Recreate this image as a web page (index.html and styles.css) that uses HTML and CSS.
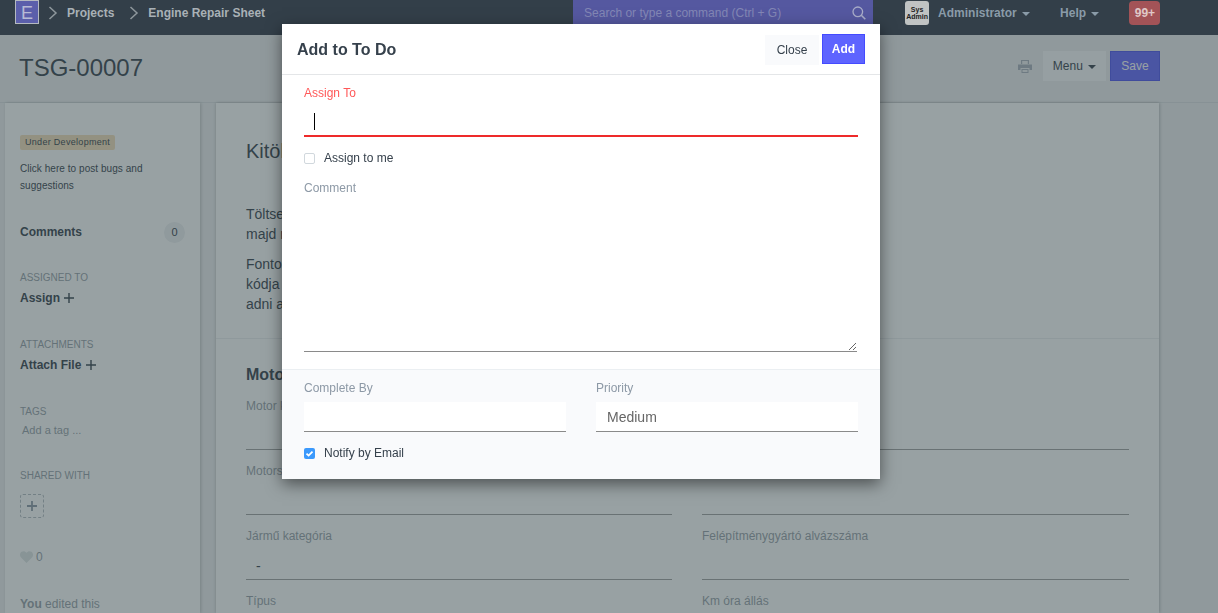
FILE: index.html
```html
<!DOCTYPE html>
<html lang="en">

<head>
    <meta charset="UTF-8">
    <meta name="viewport" content="width=device-width, initial-scale=1.0">
    <title>TSG-00007</title>
    <link rel="stylesheet" href="styles.css">
</head>

<body>
    <nav class="navbar">
        <div class="logo">E</div>
        <svg class="crumb-arrow" width="10" height="14" viewBox="0 0 10 14"><path d="M1.500 1l6.500 6-6.500 6" fill="none" stroke="#8e979c" stroke-width="1.500"/></svg>
        <a class="crumb">Projects</a>
        <svg class="crumb-arrow crumb-arrow-next" width="10" height="14" viewBox="0 0 10 14"><path d="M1.500 1l6.500 6-6.500 6" fill="none" stroke="#8e979c" stroke-width="1.500"/></svg>
        <a class="crumb">Engine Repair Sheet</a>
        <div class="search">
            <span>Search or type a command (Ctrl + G)</span>
            <svg width="14" height="14" viewBox="0 0 14 14"><circle cx="5.800" cy="5.800" r="4.800" fill="none" stroke="#a9adc9" stroke-width="1.300"/><path d="M9.300 9.300l4 4" stroke="#a9adc9" stroke-width="1.600"/></svg>
        </div>
        <div class="avatar"><span>Sys<br>Admin</span></div>
        <a class="nav-link nav-admin">Administrator <i class="caret"></i></a>
        <a class="nav-link nav-help">Help <i class="caret"></i></a>
        <div class="notify">99+</div>
    </nav>

    <header class="page-head">
        <h1>TSG-00007</h1>
        <svg class="print" width="14" height="13" viewBox="0 0 14 13"><path d="M3 0h8v4H3zM0 4.500h14V10h-2.500V8h-9v2H0zM3.500 9h7v4h-7z" fill="#abb1bd"/><path d="M4.200 1h5.600v3H4.200zM4.500 10h5v2h-5z" fill="#eeeff1"/></svg>
        <button class="btn-menu">Menu <i class="caret"></i></button>
        <button class="btn-save">Save</button>
    </header>

    <div class="page-body">
        <aside class="sidebar">
            <span class="dev-badge">Under Development</span>
            <p class="bugs">Click here to post bugs and suggestions</p>
            <div class="comments"><b>Comments</b><span class="count">0</span></div>
            <h6 class="side-title side-assigned">ASSIGNED TO</h6>
            <div class="side-action">Assign <svg class="plus" width="10" height="10" viewBox="0 0 10 10"><path d="M0 5h10M5 0v10" stroke="#36414c" stroke-width="1.400"/></svg></div>
            <h6 class="side-title side-attach">ATTACHMENTS</h6>
            <div class="side-action">Attach File <svg class="plus" width="10" height="10" viewBox="0 0 10 10"><path d="M0 5h10M5 0v10" stroke="#36414c" stroke-width="1.400"/></svg></div>
            <h6 class="side-title side-tags">TAGS</h6>
            <div class="add-tag">Add a tag ...</div>
            <h6 class="side-title side-shared">SHARED WITH</h6>
            <div class="share-add"><svg width="10" height="10" viewBox="0 0 10 10"><path d="M0 5h10M5 0v10" stroke="#8d99a6" stroke-width="1.800"/></svg></div>
            <div class="likes">
                <svg width="13" height="12" viewBox="0 0 13 12"><path d="M6.500 12L1 6.500C-.6 4.800-.2 2 1.500.8 3.200-.3 5.300.1 6.500 1.800 7.700.1 9.800-.3 11.500.8c1.700 1.200 2.100 4 .5 5.700z" fill="#dfe5e5"/></svg>
                <span>0</span>
            </div>
            <div class="edited"><b>You</b> edited this</div>
        </aside>

        <main class="form-card">
            <section class="intro">
                <h2>Kitöltés</h2>
                <p>Töltse ki az adatokat,<br>majd mentse el.</p>
                <p>Fontos, hogy a motor<br>kódja helyes legyen,<br>adni az adatokat.</p>
            </section>
            <section class="fields">
                <h3>Motor adatok</h3>
                <div class="field-grid">
                    <div class="field"><label>Motor kód</label><div class="value"></div></div>
                    <div class="field"><label>Motor típus</label><div class="value"></div></div>
                    <div class="field"><label>Motorszám</label><div class="value"></div></div>
                    <div class="field"><label>Alvázszám</label><div class="value"></div></div>
                    <div class="field"><label>Jármű kategória</label><div class="value">-</div></div>
                    <div class="field"><label>Felépítménygyártó alvázszáma</label><div class="value"></div></div>
                    <div class="field"><label>Típus</label></div>
                    <div class="field"><label>Km óra állás</label></div>
                </div>
            </section>
        </main>
    </div>

    <div class="backdrop"></div>

    <div class="modal">
        <div class="modal-header">
            <h4>Add to To Do</h4>
            <button class="btn-close">Close</button>
            <button class="btn-add">Add</button>
        </div>
        <div class="modal-main">
            <label class="label-error">Assign To</label>
            <div class="input-error"><span class="cursor"></span></div>
            <div class="check-row check-assign"><span class="checkbox"></span>Assign to me</div>
            <label class="label-comment">Comment</label>
            <textarea class="comment"></textarea>
        </div>
        <div class="modal-lower">
            <div class="lower-grid">
                <div>
                    <label>Complete By</label>
                    <div class="lower-input"></div>
                </div>
                <div>
                    <label>Priority</label>
                    <div class="lower-input">Medium</div>
                </div>
            </div>
            <div class="check-row check-notify">
                <span class="checkbox checked"><svg width="11" height="11" viewBox="0 0 11 11"><path d="M2.500 5.600l2.100 2 3.900-4" fill="none" stroke="#fff" stroke-width="1.800"/></svg></span>Notify by Email
            </div>
        </div>
    </div>
</body>

</html>
```

FILE: styles.css
```css
* {
    box-sizing: border-box;
}

html,
body {
    margin: 0;
    height: 613px;
    overflow: hidden;
}

body {
    font-family: "Liberation Sans", Arial, sans-serif;
    font-size: 12px;
    color: #36414c;
    background-color: #eeeff1;
}

/* navbar, colours are the dimmed ones so it sits above the backdrop */
.navbar {
    position: relative;
    z-index: 2;
    display: flex;
    align-items: flex-start;
    height: 35px;
    background-color: #333f49;
    color: #a9b1b6;
}

.logo {
    width: 24px;
    height: 24px;
    margin-left: 15px;
    background-color: #5b5fab;
    border: 1px solid #b5bac0;
    color: #b7bad5;
    font-size: 18px;
    line-height: 24px;
    text-align: center;
}

.crumb-arrow {
    margin: 6px 0 0 9px;
}

.crumb-arrow-next {
    margin-left: 15px;
}

.crumb {
    margin: 6px 0 0 9px;
    font-weight: bold;
    font-size: 12px;
    line-height: 14px;
}

.search {
    display: flex;
    justify-content: space-between;
    align-items: flex-start;
    width: 300px;
    height: 35px;
    margin-left: 308px;
    padding: 6px 7px 0 11px;
    background-color: #5558a0;
    color: #8387b5;
    line-height: 14px;
}

.avatar {
    display: flex;
    align-items: center;
    justify-content: center;
    width: 24px;
    height: 24px;
    margin: 1px 0 0 32px;
    background-color: #c0c3c3;
    border-radius: 3px;
    color: #222;
    font-size: 7px;
    font-weight: bold;
    line-height: 7px;
    text-align: center;
}

.nav-link {
    margin-top: 6px;
    color: #8a9ba8;
    font-weight: bold;
    line-height: 14px;
}

.nav-admin {
    margin-left: 9px;
}

.nav-help {
    margin-left: 30px;
}

.caret {
    display: inline-block;
    margin-left: 2px;
    vertical-align: middle;
    border-top: 4px solid;
    border-left: 4px solid transparent;
    border-right: 4px solid transparent;
}

.notify {
    width: 31px;
    height: 24px;
    margin: 1px 0 0 30px;
    background-color: #a35357;
    border-radius: 4px;
    color: #e0c8c8;
    font-weight: bold;
    line-height: 24px;
    text-align: center;
}

/* page head */
.page-head {
    display: flex;
    align-items: flex-start;
    height: 68px;
    padding: 16px 58px 0 19px;
    border-bottom: 1px solid #dcdfe2;
}

.page-head h1 {
    margin: 2px auto 0 0;
    font-size: 24px;
    font-weight: normal;
    line-height: 30px;
}

.print {
    margin: 9px 11px 0 0;
}

.page-head button {
    height: 30px;
    padding: 0;
    font-family: inherit;
    font-size: 12px;
    border-radius: 0;
}

.btn-menu {
    width: 63px;
    margin-right: 4px;
    background-color: #fafbfc;
    border: none;
    color: #36414c;
}

.btn-save {
    width: 50px;
    background-color: #6366ff;
    border: 1px solid #4f55f0;
    color: #fff;
}

/* sidebar */
.page-body {
    display: flex;
    align-items: stretch;
    height: 510px;
    padding-left: 5px;
}

.sidebar {
    width: 195px;
    padding: 31px 15px 0;
    background-color: #fff;
    box-shadow: 1px 0 3px rgba(0, 0, 0, 0.2);
}

.dev-badge {
    display: inline-block;
    height: 15px;
    padding: 0 5px;
    background-color: #f5dfba;
    border-radius: 2px;
    font-size: 9px;
    line-height: 15px;
    letter-spacing: 0.3px;
}

.bugs {
    width: 150px;
    margin: 10px 0 0;
    font-size: 10px;
    line-height: 17px;
    letter-spacing: 0.05px;
}

.comments {
    display: flex;
    justify-content: space-between;
    align-items: center;
    margin-top: 28px;
    height: 20px;
}

.comments b {
    margin-top: -1px;
}

.count {
    width: 21px;
    height: 21px;
    background-color: #eef0f2;
    border-radius: 50%;
    font-size: 11px;
    line-height: 21px;
    text-align: center;
}

.side-title {
    margin: 0;
    color: #979fa8;
    font-size: 10px;
    font-weight: normal;
    line-height: 12px;
}

.side-assigned {
    margin-top: 30px;
}

.side-attach {
    margin-top: 34px;
}

.side-tags {
    margin-top: 34px;
}

.side-shared {
    margin-top: 33px;
}

.side-action {
    margin-top: 7px;
    font-weight: bold;
    line-height: 14px;
}

.plus {
    margin-left: 1px;
    vertical-align: -1px;
}

.add-tag {
    margin: 5px 0 0 2px;
    color: #979fa8;
    font-size: 11px;
    line-height: 14px;
}

.share-add {
    display: flex;
    align-items: center;
    justify-content: center;
    width: 24px;
    height: 24px;
    margin-top: 12px;
    border: 1px dashed #b5bcc2;
    border-radius: 3px;
}

.likes {
    display: flex;
    align-items: center;
    gap: 3px;
    margin-top: 32px;
    color: #979fa8;
    line-height: 14px;
}

.edited {
    margin-top: 33px;
    color: #979fa8;
    line-height: 14px;
}

/* form */
.form-card {
    width: 943px;
    margin-left: 16px;
    overflow: hidden;
    background-color: #fff;
    box-shadow: 1px 0 3px rgba(0, 0, 0, 0.2), -1px 0 3px rgba(0, 0, 0, 0.1);
}

.intro {
    height: 236px;
    padding: 36px 30px 0;
    border-bottom: 1px solid #eceef0;
}

.intro h2 {
    margin: 0 0 41px;
    font-size: 20px;
    font-weight: normal;
    line-height: 24px;
}

.intro p {
    margin: 0 0 10px;
    font-size: 14px;
    line-height: 20px;
}

.fields {
    padding: 26px 30px 0;
}

.fields h3 {
    margin: 0;
    font-size: 16px;
    line-height: 20px;
}

.field-grid {
    display: grid;
    grid-template-columns: 426px 427px;
    column-gap: 30px;
    row-gap: 14px;
    margin-top: 14px;
}

.field label {
    display: block;
    color: #979fa8;
    line-height: 14px;
}

.value {
    height: 37px;
    padding: 15px 10px 0;
    border-bottom: 1px solid #a1a1a1;
    color: #36414c;
    font-size: 14px;
}

/* dialog */
.backdrop {
    position: fixed;
    inset: 0;
    background-color: rgba(49, 67, 71, 0.5);
}

.modal {
    position: fixed;
    z-index: 3;
    top: 24px;
    left: 282px;
    width: 598px;
    background-color: #fff;
    box-shadow: 0 5px 15px rgba(0, 0, 0, 0.5);
}

.modal-header {
    display: flex;
    align-items: flex-start;
    height: 51px;
    padding: 10px 15px 0;
    border-bottom: 1px solid #e4e6e8;
}

.modal-header h4 {
    margin: 6px auto 0 0;
    font-size: 16px;
    font-weight: bold;
    line-height: 20px;
}

.modal-header button {
    height: 30px;
    padding: 0;
    font-family: inherit;
    font-size: 12px;
    border-radius: 0;
}

.btn-close {
    width: 54px;
    margin: 1px 3px 0 0;
    height: 29px;
    padding-right: 2px;
    background-color: #f9fafc;
    border: none;
    color: #36414c;
}

.btn-add {
    width: 43px;
    background-color: #5e64ff;
    border: 1px solid #444bff;
    color: #fff;
    font-weight: bold;
}

.modal-main {
    height: 294px;
    padding: 11px 22px 0;
}

.modal label {
    display: block;
    line-height: 14px;
    color: #8d99a6;
}

.modal .label-error {
    color: #ff5858;
}

.input-error {
    height: 37px;
    padding: 13px 10px 0;
    border-bottom: 2px solid #ee2a2a;
}

.cursor {
    display: block;
    width: 1px;
    height: 17px;
    background-color: #000;
}

.check-row {
    display: flex;
    align-items: center;
    gap: 9px;
    height: 14px;
    line-height: 14px;
    color: #36414c;
}

.checkbox {
    display: block;
    width: 11px;
    height: 11px;
    border: 1px solid #d1d8dd;
    border-radius: 2px;
    background-color: #fff;
}

.checkbox.checked {
    border: none;
    background-color: #3b99fc;
}

.check-assign {
    margin-top: 14px;
}

.modal .label-comment {
    margin-top: 16px;
}

.comment {
    display: block;
    width: 553px;
    height: 157px;
    margin: 0;
    padding: 0;
    border: none;
    border-bottom: 1px solid #8a8a8a;
    outline: none;
    resize: both;
}

.modal-lower {
    height: 110px;
    padding: 11px 22px 0;
    background-color: #f9fafc;
    border-top: 1px solid #ebeff2;
}

.lower-grid {
    display: grid;
    grid-template-columns: 262px 262px;
    column-gap: 30px;
}

.lower-input {
    height: 30px;
    margin-top: 7px;
    padding: 0 11px;
    background-color: #fff;
    border-bottom: 1px solid #8a8a8a;
    color: #666;
    font-size: 14px;
    line-height: 30px;
}

.check-notify {
    margin-top: 14px;
}
```
